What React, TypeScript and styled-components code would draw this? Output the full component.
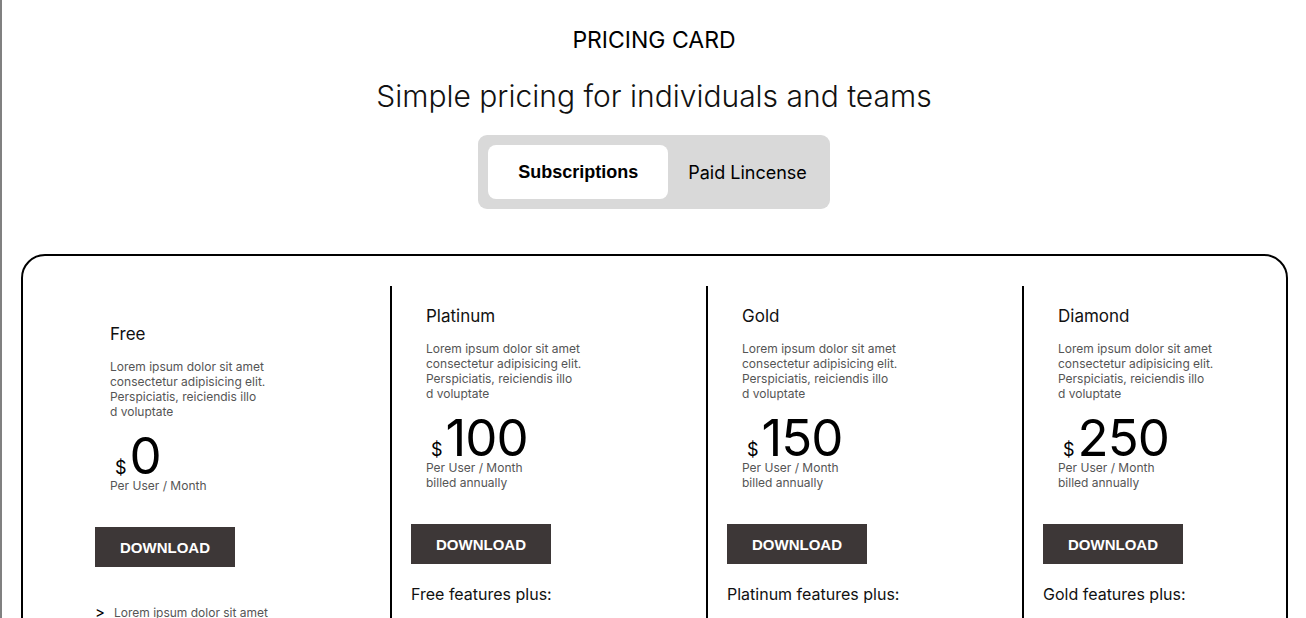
import type { FC } from 'react';
import { Fragment, useState } from 'react';
import styled, { createGlobalStyle } from 'styled-components';

const GlobalStyle = createGlobalStyle`
	html,
	body {
		margin: 0;
		padding: 0;
		background: #ffffff;
		overflow: hidden;
	}

	body {
		font-family: Inter, 'Noto Sans', sans-serif;
		color: #000000;
	}

	* {
		box-sizing: border-box;
	}
`;

type Plan = {
	name: string;
	price: number;
	billed: boolean;
	featuresTitle?: string;
	shift?: number;
};

const DESCRIPTION = [
	'Lorem ipsum dolor sit amet',
	'consectetur adipisicing elit.',
	'Perspiciatis, reiciendis illo',
	'd voluptate',
];

const PLANS: Plan[] = [
	{ name: 'Free', price: 0, billed: false, shift: 18 },
	{ name: 'Platinum', price: 100, billed: true, featuresTitle: 'Free features plus:' },
	{ name: 'Gold', price: 150, billed: true, featuresTitle: 'Platinum features plus:' },
	{ name: 'Diamond', price: 250, billed: true, featuresTitle: 'Gold features plus:' },
];

const FEATURES = [
	'Lorem ipsum dolor sit amet',
	'Lorem ipsum dolor sit amet',
	'Lorem ipsum dolor sit amet',
];

const App: FC = () => {
	const [tab, setTab] = useState<'sub' | 'paid'>('sub');

	return (
		<Page>
			<GlobalStyle />
			<Eyebrow>PRICING CARD</Eyebrow>
			<Title>Simple pricing for individuals and teams</Title>
			<Toggle>
				<ToggleButton $active={tab === 'sub'} onClick={() => setTab('sub')}>
					Subscriptions
				</ToggleButton>
				<ToggleButton $active={tab === 'paid'} onClick={() => setTab('paid')}>
					Paid Lincense
				</ToggleButton>
			</Toggle>
			<Board>
				<Columns>
					{PLANS.map((plan, i) => (
						<Column key={plan.name} $divider={i > 0} $shift={plan.shift ?? 0}>
							<Info>
								<PlanName>{plan.name}</PlanName>
								<Description>
									{DESCRIPTION.map((line, j) => (
										<Fragment key={j}>
											{line}
											{j < DESCRIPTION.length - 1 && <br />}
										</Fragment>
									))}
								</Description>
								<Price>
									<Currency>$</Currency>
									{plan.price}
								</Price>
								<Period>
									Per User / Month
									{plan.billed && (
										<>
											<br />
											billed annually
										</>
									)}
								</Period>
							</Info>
							<DownloadButton>DOWNLOAD</DownloadButton>
							<Features $hasTitle={!!plan.featuresTitle}>
								{plan.featuresTitle && <FeaturesTitle>{plan.featuresTitle}</FeaturesTitle>}
								<FeatureList>
									{FEATURES.map((f, j) => (
										<FeatureItem key={j}>
											<Chevron>&gt;</Chevron>
											{f}
										</FeatureItem>
									))}
								</FeatureList>
							</Features>
						</Column>
					))}
				</Columns>
			</Board>
		</Page>
	);
};

export default App;

const Page = styled.div`
	min-height: 100vh;
	border-left: 2px solid #808080;
	padding-top: 27px;
	display: flex;
	flex-direction: column;
	align-items: center;
`;

const Eyebrow = styled.h2`
	margin: 0;
	font-size: 23px;
	line-height: 26px;
	font-weight: 400;
	color: #000000;
`;

const Title = styled.h1`
	margin: 23px 0 0;
	font-size: 30px;
	line-height: 40px;
	font-weight: 300;
	color: #111111;
`;

const Toggle = styled.div`
	margin-top: 19px;
	display: flex;
	padding: 10px;
	background: #d9d9d9;
	border-radius: 9px;
`;

const ToggleButton = styled.button<{ $active: boolean }>`
	height: 54px;
	border: none;
	border-radius: 8px;
	cursor: pointer;
	color: #000000;
	background: ${({ $active }) => ($active ? '#ffffff' : 'transparent')};
	padding: ${({ $active }) => ($active ? '0 30px' : '0 13px 0 20px')};
	font-family: ${({ $active }) =>
		$active ? "'Liberation Sans', Arial, sans-serif" : 'Inter, sans-serif'};
	font-weight: ${({ $active }) => ($active ? 700 : 400)};
	font-size: 18px;
`;

const Board = styled.section`
	align-self: stretch;
	margin: 45px 18px 0 19px;
	border: 2px solid #000000;
	border-radius: 24px;
	padding: 30px 0 40px 51px;
	overflow: hidden;
`;

const Columns = styled.div`
	display: flex;
	align-items: stretch;
`;

const Column = styled.div<{ $divider: boolean; $shift: number }>`
	flex: 0 0 316px;
	border-left: 2px solid ${({ $divider }) => ($divider ? '#000000' : 'transparent')};
	padding: ${({ $shift }) => 19 + $shift}px 19px 0;
	display: flex;
	flex-direction: column;
	align-items: flex-start;
`;

const Info = styled.div`
	padding-left: 15px;
`;

const PlanName = styled.h3`
	margin: 0;
	font-size: 17px;
	line-height: 22px;
	font-weight: 400;
	color: #111111;
`;

const Description = styled.p`
	margin: 14px 0 0;
	font-size: 12px;
	line-height: 15px;
	font-weight: 400;
	color: #555555;
`;

const Price = styled.div`
	margin-top: 15px;
	padding-left: 5px;
	height: 44px;
	font-size: 51px;
	line-height: 44px;
	font-weight: 400;
	letter-spacing: -1px;
	color: #000000;
`;

const Currency = styled.span`
	margin-right: 3px;
	font-size: 18px;
	line-height: 1;
	letter-spacing: 0;
`;

const Period = styled.p`
	margin: 0;
	font-size: 12px;
	line-height: 15px;
	color: #555555;
`;

const DownloadButton = styled.button`
	flex-shrink: 0;
	margin-top: 34px;
	width: 140px;
	height: 40px;
	border: none;
	background: #3d3737;
	color: #ffffff;
	font-family: 'Liberation Sans', Arial, sans-serif;
	font-weight: 700;
	font-size: 15px;
	cursor: pointer;
`;

const Features = styled.div<{ $hasTitle: boolean }>`
	margin-top: ${({ $hasTitle }) => ($hasTitle ? '20px' : '38px')};
`;

const FeaturesTitle = styled.h4`
	margin: 0 0 22px;
	font-size: 16px;
	line-height: 20px;
	font-weight: 400;
	color: #111111;
`;

const FeatureList = styled.ul`
	margin: 0;
	padding: 0;
	list-style: none;
	display: flex;
	flex-direction: column;
	gap: 10px;
`;

const FeatureItem = styled.li`
	display: flex;
	align-items: center;
	font-size: 12px;
	line-height: 16px;
	color: #555555;
`;

const Chevron = styled.span`
	width: 19px;
	font-size: 15px;
	color: #000000;
`;
